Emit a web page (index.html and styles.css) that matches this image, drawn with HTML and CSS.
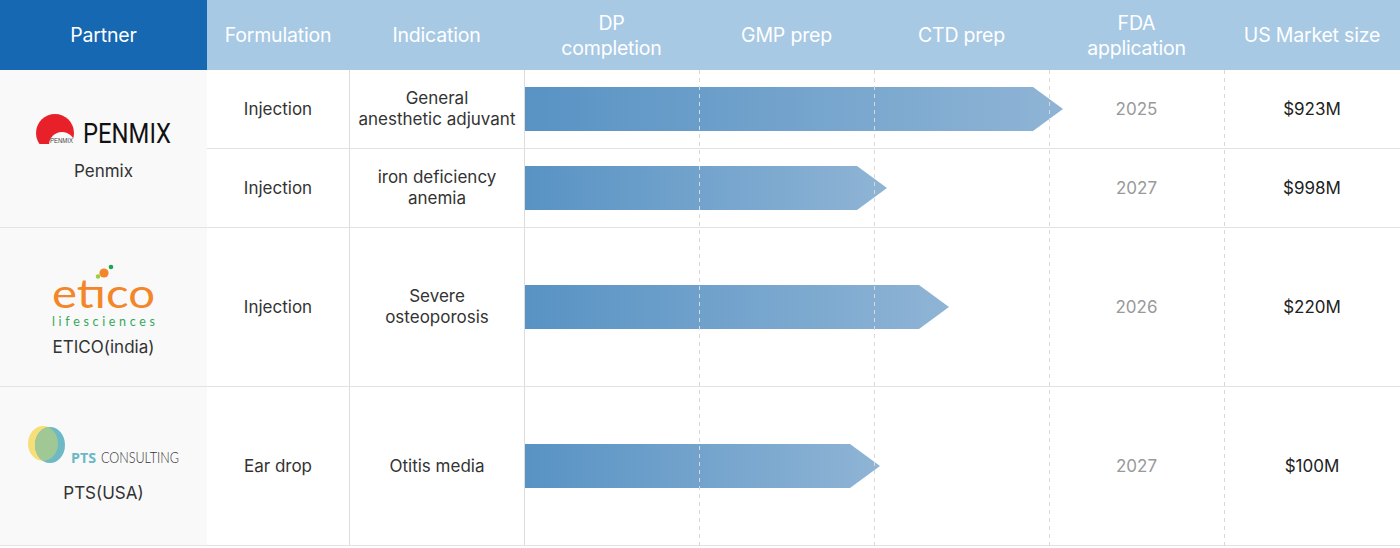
FILE: index.html
```html
<!DOCTYPE html>
<html lang="en">
<head>
<meta charset="utf-8">
<title>Pipeline</title>
<link rel="stylesheet" href="styles.css">
</head>
<body>
<div class="table">
  <div class="th th-partner">Partner</div>
  <div class="th">Formulation</div>
  <div class="th">Indication</div>
  <div class="th">DP<br>completion</div>
  <div class="th">GMP prep</div>
  <div class="th">CTD prep</div>
  <div class="th">FDA<br>application</div>
  <div class="th">US Market size</div>

  <!-- Penmix -->
  <div class="td partner span2 p-penmix">
    <svg class="logo" width="140" height="32" viewBox="0 0 140 32">
      <defs><clipPath id="pclip"><rect x="0" y="0" width="48" height="31"/></clipPath></defs>
      <circle cx="21" cy="20" r="19" fill="#e8202a" clip-path="url(#pclip)"/>
      <circle cx="28" cy="32" r="13" fill="#f9f9f9"/>
      <text x="16" y="30" class="pm-small" textLength="23" lengthAdjust="spacingAndGlyphs">PENMIX</text>
      <text x="49" y="30" class="pm-big" textLength="88" lengthAdjust="spacingAndGlyphs">PENMIX</text>
    </svg>
    <div class="pname">Penmix</div>
  </div>
  <div class="td">Injection</div>
  <div class="td ind">General<br>anesthetic adjuvant</div>
  <div class="td timeline"><div class="arrow" style="width:538px"></div></div>
  <div class="td year">2025</div>
  <div class="td money">$923M</div>

  <div class="td">Injection</div>
  <div class="td ind">iron deficiency<br>anemia</div>
  <div class="td timeline"><div class="arrow" style="width:362px"></div></div>
  <div class="td year">2027</div>
  <div class="td money">$998M</div>

  <!-- Etico -->
  <div class="td partner p-etico">
    <svg class="logo" width="108" height="68" viewBox="0 0 108 68">
      <text x="2" y="47" class="et-big" textLength="103" lengthAdjust="spacingAndGlyphs">etıco</text>
      <circle cx="54" cy="12" r="4.6" fill="#f4862a"/>
      <circle cx="61" cy="6" r="2.3" fill="#1fa54a"/>
      <circle cx="48" cy="15.5" r="2.2" fill="#9ccf3c"/>
      <text x="2" y="65" class="et-small" textLength="103" lengthAdjust="spacing">lifesciences</text>
    </svg>
    <div class="pname">ETICO(india)</div>
  </div>
  <div class="td">Injection</div>
  <div class="td ind">Severe<br>osteoporosis</div>
  <div class="td timeline"><div class="arrow" style="width:424px"></div></div>
  <div class="td year">2026</div>
  <div class="td money">$220M</div>

  <!-- PTS -->
  <div class="td partner p-pts">
    <svg class="logo" width="157" height="42" viewBox="0 0 157 42">
      <defs>
        <clipPath id="yclip"><ellipse cx="18" cy="18.5" rx="15" ry="17.5"/></clipPath>
      </defs>
      <ellipse cx="18" cy="18.5" rx="15" ry="17.5" fill="#f6df78"/>
      <ellipse cx="25" cy="20" rx="15" ry="18" fill="#6db9c5"/>
      <ellipse cx="25" cy="20" rx="15" ry="18" fill="#9fc895" clip-path="url(#yclip)"/>
      <text x="46" y="38" class="pts-a" textLength="25" lengthAdjust="spacingAndGlyphs">PTS</text>
      <text x="76" y="38" class="pts-b" textLength="78" lengthAdjust="spacingAndGlyphs">CONSULTING</text>
    </svg>
    <div class="pname">PTS(USA)</div>
  </div>
  <div class="td">Ear drop</div>
  <div class="td ind">Otitis media</div>
  <div class="td timeline"><div class="arrow" style="width:355px"></div></div>
  <div class="td year">2027</div>
  <div class="td money">$100M</div>

  <div class="dashes">
    <div class="dash c5"></div>
    <div class="dash c6"></div>
    <div class="dash c7"></div>
    <div class="dash c8"></div>
  </div>
</div>
</body>
</html>
```
FILE: styles.css
```css
html, body {
  margin: 0;
  padding: 0;
  background: #fff;
}
body {
  font-family: Inter, "Noto Sans", sans-serif;
}
.table {
  position: relative;
  display: grid;
  grid-template-columns: 207px 142px 175px 175px 175px 175px 175px 176px;
  grid-template-rows: 70px 79px 79px 159px 159px;
  width: 1400px;
}
.th {
  display: flex;
  align-items: center;
  justify-content: center;
  text-align: center;
  background: #a8c9e4;
  color: #fff;
  font-size: 19.5px;
  line-height: 25px;
  letter-spacing: -0.2px;
  padding-top: 1px;
  box-sizing: border-box;
}
.th-partner {
  background: #1668b2;
}
.td {
  box-sizing: border-box;
  display: flex;
  align-items: center;
  justify-content: center;
  text-align: center;
  border-bottom: 1px solid #e3e3e3;
  font-size: 17px;
  line-height: 21px;
  color: #333;
}
.ind {
  border-left: 1px solid #dddddd;
}
.partner {
  flex-direction: column;
  background: #f9f9f9;
}
.p-penmix {
  gap: 16px;
  padding-bottom: 3px;
}
.p-etico {
  gap: 8px;
  padding-top: 4px;
}
.p-pts {
  gap: 16px;
  padding-bottom: 3px;
}
.span2 {
  grid-row: span 2;
}
.logo {
  display: block;
  overflow: visible;
}
.pname {
  font-size: 17px;
  line-height: 21px;
  color: #333;
}
.timeline {
  grid-column: span 3;
  justify-content: flex-start;
  border-left: 1px solid #dddddd;
}
.arrow {
  flex: none;
  height: 44px;
  background: linear-gradient(to right, #5893c4, #8fb4d5);
  clip-path: polygon(0 0, calc(100% - 30px) 0, 100% 50%, calc(100% - 30px) 100%, 0 100%);
}
.year {
  color: #999;
}
.money {
  color: #222;
}
.dashes {
  position: absolute;
  top: 70px;
  bottom: 0;
  left: 0;
  right: 0;
  display: grid;
  grid-template-columns: 207px 142px 175px 175px 175px 175px 175px 176px;
  pointer-events: none;
}
.dash {
  background: linear-gradient(#d9d9d9 4px, transparent 4px) 0 0 / 1px 8px repeat-y;
}
.c5 { grid-column: 5; grid-row: 1; }
.c6 { grid-column: 6; grid-row: 1; }
.c7 { grid-column: 7; grid-row: 1; }
.c8 { grid-column: 8; grid-row: 1; }

.pm-small {
  font-family: "Liberation Sans", sans-serif;
  font-size: 6.5px;
  fill: #444;
}
.pm-big {
  font-family: Roboto, sans-serif;
  font-weight: 400;
  font-size: 28px;
  fill: #111;
}
.et-big {
  font-family: Lato, sans-serif;
  font-weight: 400;
  font-size: 40px;
  fill: #f4862a;
}
.et-small {
  font-family: Lato, sans-serif;
  font-size: 12.5px;
  fill: #33a85a;
}
.pts-a {
  font-family: "Open Sans", sans-serif;
  font-weight: 700;
  font-size: 14px;
  fill: #6ab8c4;
}
.pts-b {
  font-family: Lato, sans-serif;
  font-weight: 300;
  font-size: 15px;
  fill: #333;
}
```
